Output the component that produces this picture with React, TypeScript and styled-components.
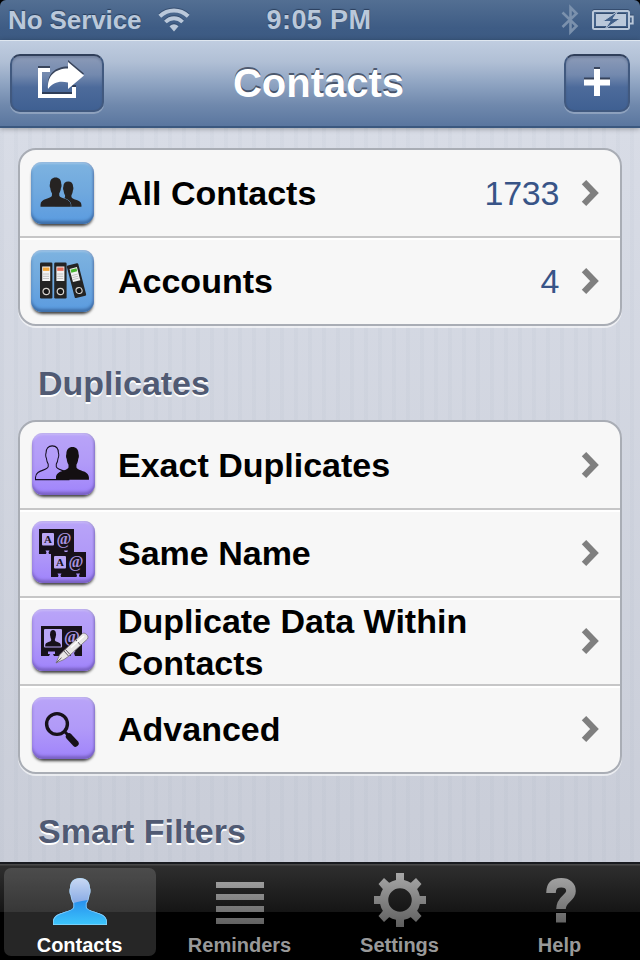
import type { ReactNode } from "react";
import { createGlobalStyle, styled } from "styled-components";

// head and shoulders, 54 x 47
const PERSON =
  "M27 0C33 0 37 3.5 37 10C38 12 37.5 16 36.5 17C36 21 35 23.5 33.5 25.5V29C35 35 54 33 54 44V47H0V44C0 33 19 35 20.5 29V25.5C19 23.5 18 21 17.5 17C16.5 16 16 12 17 10C17 3.5 21 0 27 0Z";

const AllContactsIcon = () => (
  <svg width="64" height="64">
    <g fill="#262322">
      <path d={PERSON} transform="translate(24 19.5) scale(.49 .535)" />
      <path
        d={PERSON}
        transform="translate(9.5 15.5) scale(.56 .62)"
        stroke="#6ea7dc"
        strokeWidth="1.6"
        paintOrder="stroke"
      />
    </g>
  </svg>
);

const Binder = ({ color }: { color: string }) => (
  <>
    <rect width="12.4" height="36" rx="1.2" fill="#242424" />
    <rect x="2.2" y="4" width="8" height="14.5" fill="#f2f2f2" />
    <rect x="3" y="5" width="6.4" height="3.4" fill={color} />
    <path d="M3 11.5h6M3 13.8h6M3 16h6" stroke="#b5b5b5" strokeWidth=".8" />
    <circle cx="6.2" cy="29" r="3.2" fill="#171717" stroke="#d8d4cf" strokeWidth="1.2" />
  </>
);

const AccountsIcon = () => (
  <svg width="64" height="64">
    <g transform="translate(9 12.5)">
      <Binder color="#f0a63c" />
    </g>
    <g transform="translate(23.2 12.5)">
      <Binder color="#e8705c" />
    </g>
    <g transform="translate(35.6 15.9) rotate(-14.5) scale(.95 .93)">
      <Binder color="#46b52d" />
    </g>
  </svg>
);

const ExactIcon = () => (
  <svg width="64" height="64">
    <path
      d={PERSON}
      transform="translate(3.5 12.8) scale(.62 .72)"
      fill="none"
      stroke="#130d1c"
      strokeWidth="1.6"
    />
    <path d={PERSON} transform="translate(24 14) scale(.61 .695)" fill="#140f12" />
  </svg>
);

const NameCard = () => (
  <>
    <path
      d="M0 0H35V25H28.5L28 23.5L29 21.5H25L26 23.5L25.5 25H10L9.5 23.5L10.5 21.5H6.5L7.5 23.5L7 25H0Z"
      fill="#17111a"
    />
    <rect x="3" y="4" width="12" height="12.5" rx="1" fill="#b9a6f5" />
    <CardLetter x="9" y="13.8" $size={11} $color="#17111a">
      A
    </CardLetter>
    <CardLetter x="25" y="15" $size={16} $color="#a893dd">
      @
    </CardLetter>
  </>
);

const SameNameIcon = () => (
  <svg width="64" height="64">
    <g transform="translate(7 8)">
      <NameCard />
    </g>
    <g transform="translate(19 31)">
      <NameCard />
    </g>
  </svg>
);

const DuplicateDataIcon = () => (
  <svg width="64" height="64">
    <path
      d="M9 17H50V47H43L42 44L43.5 42H38L39.5 44L38.5 47H22L21 45H23V42.5H16V45H18L17 47H9Z"
      fill="#17111a"
    />
    <rect x="12" y="20" width="18" height="18.5" rx="1" fill="#b9a6f5" />
    <path d={PERSON} transform="translate(13.2 21) scale(.29 .35)" fill="#17111a" />
    <CardLetter x="40" y="33" $size={17} $color="#a893dd">
      @
    </CardLetter>
    <path
      d="M24 54L27.5 46L32 41.5L50.5 24.5C53 23 57.5 27 55.5 30L37 47L32 50.5Z"
      fill="#e8e6e6"
      stroke="#767078"
      strokeWidth=".8"
    />
    <path
      d="M24.5 53.5L29.5 48.8M32 42L36.5 47M33.5 40.5L38 45.5M44 31L48.5 36"
      stroke="#5d575f"
    />
    <path d="M39 38.5L52 27" stroke="#fff" strokeWidth="1.5" />
  </svg>
);

const AdvancedIcon = () => (
  <svg width="64" height="64">
    <circle cx="25" cy="27" r="10.4" fill="none" stroke="#17111a" strokeWidth="3.4" />
    <path d="M32 34L37 39" stroke="#17111a" strokeWidth="3" />
    <path d="M37 39.5L43.5 46.5" stroke="#17111a" strokeWidth="6.4" strokeLinecap="round" />
  </svg>
);

const Chevron = () => (
  <svg width="20" height="28" viewBox="0 0 20 28">
    <path d="M4 3.2L14.5 14L4 24.8" fill="none" stroke="#7f7f7f" strokeWidth="6.2" />
  </svg>
);

const ShareIcon = () => (
  <S.EngravedSvg width="54" height="50" viewBox="-4 0 54 50">
    <path d="M16 12H6V38H40V29" fill="none" stroke="#fff" strokeWidth="4" />
    <path d="M34 4L50 17.5L34 31V24.5C26 22.5 19 24 14 31C13 18 21 10.5 34 10.5Z" fill="#fff" />
  </S.EngravedSvg>
);

const PlusIcon = () => (
  <S.EngravedSvg width="26" height="28" viewBox="0 0 26 28">
    <path d="M10 0H16V10.5H26V16.5H16V27H10V16.5H0V10.5H10Z" fill="#fff" />
  </S.EngravedSvg>
);

const WifiIcon = () => (
  <S.StatusSvg width="32" height="24" viewBox="0 0 32 24">
    <path d="M1.8 8.3C10 .5 22 .5 30.2 8.3" fill="none" stroke="#bac8da" strokeWidth="4" />
    <path d="M7.4 14C12.5 9 19.5 9 24.6 14" fill="none" stroke="#bac8da" strokeWidth="3.8" />
    <path d="M11.5 18.3C14 15.5 18 15.5 20.5 18.3L16 23.5Z" fill="#bac8da" />
  </S.StatusSvg>
);

const BluetoothIcon = () => (
  <svg width="18" height="32" viewBox="0 0 18 32">
    <path
      d="M1.5 8.5L15.5 22L9.5 28V3.5L15.5 9.5L1.5 23"
      fill="none"
      stroke="#7b91ad"
      strokeWidth="2.6"
    />
  </svg>
);

const BatteryIcon = () => (
  <S.StatusSvg width="42" height="22" viewBox="0 0 42 22">
    <rect x="1" y="2" width="36" height="18" rx="1.5" fill="none" stroke="#bac8da" strokeWidth="2" />
    <rect x="4" y="5" width="30" height="12" fill="#bac8da" />
    <path d="M37 7.5H40.7V14.5H37" fill="none" stroke="#bac8da" strokeWidth="2" />
    <path
      d="M26 2L10.5 12.5H18L13 20L28.5 9.5H21Z"
      fill="#41608a"
      stroke="#bac8da"
      strokeWidth="1"
    />
  </S.StatusSvg>
);

const GreyGradient = ({ id }: { id: string }) => (
  <linearGradient id={id} x1="0" y1="0" x2="0" y2="54" gradientUnits="userSpaceOnUse">
    <stop offset="0" stopColor="#a8a8a8" />
    <stop offset="1" stopColor="#5e5e5e" />
  </linearGradient>
);

const ContactsTabIcon = () => (
  <svg width="54" height="54" viewBox="0 0 54 54">
    <defs>
      <linearGradient id="head" x1="0" y1="0" x2="0" y2="1">
        <stop offset="0" stopColor="#c9d9f3" />
        <stop offset=".55" stopColor="#86a9e4" />
      </linearGradient>
      <linearGradient id="body" x1="0" y1="22" x2="0" y2="51" gradientUnits="userSpaceOnUse">
        <stop offset="0" stopColor="#2384ea" />
        <stop offset="1" stopColor="#3cc4fb" />
      </linearGradient>
      <clipPath id="person">
        <path d={PERSON} transform="translate(0 5)" />
      </clipPath>
    </defs>
    <g clipPath="url(#person)">
      <rect y="5" width="54" height="47" fill="url(#head)" />
      <path d="M0 36C14 32 26 28 38 26.5L54 24V52H0Z" fill="url(#body)" />
      <path
        d={PERSON}
        transform="translate(0 5)"
        fill="none"
        stroke="#a9dcfb"
        strokeOpacity=".7"
        strokeWidth="1.5"
      />
    </g>
  </svg>
);

const RemindersTabIcon = () => (
  <svg width="48" height="54" viewBox="0 0 48 54">
    <defs>
      <GreyGradient id="lines" />
    </defs>
    <path d="M0 9H48V15H0ZM0 21H48V27H0ZM0 33H48V39H0ZM0 45H48V51H0Z" fill="url(#lines)" />
  </svg>
);

const SettingsTabIcon = () => (
  <svg width="54" height="54" viewBox="0 0 54 54">
    <defs>
      <GreyGradient id="gear" />
    </defs>
    <circle cx="27" cy="27" r="16" fill="none" stroke="url(#gear)" strokeWidth="8.5" />
    <path
      fill="url(#gear)"
      d="M23 0H31V9H23ZM23 45H31V54H23ZM1 23H9V31H1ZM45 23H53V31H45ZM5.5 11L11 5L18 11.5L11.5 18ZM43 5L48.5 11L42.5 18L36 11.5ZM5.5 43L11 49L18 42.5L11.5 36ZM43 49L48.5 43L42.5 36L36 42.5Z"
    />
  </svg>
);

const HelpTabIcon = () => (
  <svg width="54" height="54" viewBox="0 0 54 54">
    <defs>
      <GreyGradient id="help" />
    </defs>
    <path
      d="M18 20C18 12 22.500 9.8 28.3 9.8C34.5 9.8 38 13 38 18C38 25.5 28 25.5 28 36"
      fill="none"
      stroke="url(#help)"
      strokeWidth="9.6"
    />
    <rect x="23" y="40" width="10" height="9.5" fill="url(#help)" />
  </svg>
);

type Tint = "blue" | "purple";

type Item = {
  label: string;
  icon: ReactNode;
  count?: number;
  wrap?: boolean;
};

const overview: Item[] = [
  { label: "All Contacts", icon: <AllContactsIcon />, count: 1733 },
  { label: "Accounts", icon: <AccountsIcon />, count: 4 },
];

const duplicates: Item[] = [
  { label: "Exact Duplicates", icon: <ExactIcon /> },
  { label: "Same Name", icon: <SameNameIcon /> },
  { label: "Duplicate Data Within Contacts", icon: <DuplicateDataIcon />, wrap: true },
  { label: "Advanced", icon: <AdvancedIcon /> },
];

const tabs = [
  { label: "Contacts", icon: <ContactsTabIcon />, active: true },
  { label: "Reminders", icon: <RemindersTabIcon />, active: false },
  { label: "Settings", icon: <SettingsTabIcon />, active: false },
  { label: "Help", icon: <HelpTabIcon />, active: false },
];

const Group = ({ items, tint }: { items: Item[]; tint: Tint }) => (
  <S.Group>
    {items.map(({ label, icon, count, wrap }) => (
      <S.Row key={label}>
        <S.Tile $tint={tint}>{icon}</S.Tile>
        <S.Label $wrap={wrap}>{label}</S.Label>
        {count !== undefined && <S.Count>{count}</S.Count>}
        <Chevron />
      </S.Row>
    ))}
  </S.Group>
);

const App = () => {
  return (
    <S.Screen>
      <GlobalStyle />
      <S.StatusBar>
        <S.Carrier>
          No Service
          <WifiIcon />
        </S.Carrier>
        <S.Clock>9:05 PM</S.Clock>
        <S.StatusRight>
          <BluetoothIcon />
          <BatteryIcon />
        </S.StatusRight>
      </S.StatusBar>
      <S.NavBar>
        <S.NavButton $width={94}>
          <ShareIcon />
        </S.NavButton>
        <S.Title>Contacts</S.Title>
        <S.NavButton $width={66}>
          <PlusIcon />
        </S.NavButton>
      </S.NavBar>
      <S.Content>
        <Group items={overview} tint="blue" />
        <S.SectionTitle>Duplicates</S.SectionTitle>
        <Group items={duplicates} tint="purple" />
        <S.SectionTitle>Smart Filters</S.SectionTitle>
      </S.Content>
      <S.TabBar>
        {tabs.map(({ label, icon, active }) => (
          <S.Tab key={label} $active={active}>
            {icon}
            <S.TabLabel>{label}</S.TabLabel>
          </S.Tab>
        ))}
      </S.TabBar>
    </S.Screen>
  );
};

const GlobalStyle = createGlobalStyle`
  body {
    margin: 0;
    background: #000;
    font-family: "Liberation Sans", Arial, sans-serif;
  }
  svg {
    display: block;
    flex: none;
  }
`;

const CardLetter = styled.text<{ $size: number; $color: string }>`
  font: bold ${({ $size }) => $size}px "Liberation Serif", serif;
  fill: ${({ $color }) => $color};
  text-anchor: middle;
`;

const S = {
  Screen: styled.div`
    display: flex;
    flex-direction: column;
    width: 640px;
    height: 960px;
    overflow: hidden;
  `,
  StatusBar: styled.div`
    display: grid;
    grid-template-columns: 1fr auto 1fr;
    align-items: center;
    box-sizing: border-box;
    height: 40px;
    padding: 0 6px 0 8px;
    border-radius: 6px 6px 0 0;
    background: linear-gradient(#536f93, #3e5c85 70%, #3c5a82);
    color: #bac8da;
    font-size: 26px;
    font-weight: bold;
    text-shadow: 0 -1px 1px rgba(20, 35, 60, 0.6);
  `,
  Carrier: styled.div`
    display: flex;
    align-items: center;
    gap: 17px;
    letter-spacing: -0.1px;
  `,
  Clock: styled.div`
    padding-right: 4px;
    font-size: 27px;
    letter-spacing: 0.4px;
  `,
  StatusRight: styled.div`
    display: flex;
    justify-content: flex-end;
    align-items: center;
    gap: 13px;
  `,
  StatusSvg: styled.svg`
    filter: drop-shadow(0 -1px 0 rgba(30, 50, 80, 0.5));
  `,
  NavBar: styled.div`
    position: relative;
    z-index: 1;
    display: flex;
    justify-content: space-between;
    box-sizing: border-box;
    height: 88px;
    padding: 13px 10px 0;
    border-top: 1px solid #dfe7f0;
    border-bottom: 2px solid #3b587f;
    background: linear-gradient(#c0cde0, #b0bfd5 25%, #8fa4c2 50%, #7089ad 75%, #5a769f);
    box-shadow: 0 1px 5px rgba(0, 0, 0, 0.3);
  `,
  NavButton: styled.div<{ $width: number }>`
    display: flex;
    align-items: center;
    justify-content: center;
    box-sizing: border-box;
    width: ${({ $width }) => $width}px;
    height: 58px;
    border: 2px solid #41597f;
    border-top-color: #303f5a;
    border-radius: 10px;
    background: linear-gradient(#8c9bb8, #7389ae 35%, #4d6b9b 58%, #3f6092);
    box-shadow:
      0 2px 0 rgba(255, 255, 255, 0.25),
      inset 0 2px 2px rgba(30, 45, 75, 0.2);
  `,
  EngravedSvg: styled.svg`
    filter: drop-shadow(0 -2px 0 rgba(40, 50, 70, 0.8));
  `,
  Title: styled.h1`
    margin: 0;
    padding-right: 31px;
    color: #fff;
    font-size: 40px;
    line-height: 58px;
    text-shadow: 0 -2px 0 rgba(50, 60, 80, 0.75);
  `,
  Content: styled.div`
    flex: 1;
    min-height: 0;
    padding: 20px 18px 0;
    overflow: hidden;
    background:
      repeating-linear-gradient(90deg, rgba(110, 130, 150, 0.04) 0 4px, transparent 4px 14px),
      linear-gradient(#d8dce6, #c9cdd8);
  `,
  SectionTitle: styled.h2`
    margin: 0;
    padding: 0 20px;
    height: 94px;
    color: #505a73;
    font-size: 34px;
    line-height: 114px;
    text-shadow: 0 2px 0 #fff;
  `,
  Group: styled.div`
    border: 2px solid #a9adb5;
    border-radius: 18px;
    background: #f7f7f7;
    box-shadow: 0 2px 0 rgba(255, 255, 255, 0.6);
  `,
  Row: styled.div`
    display: flex;
    align-items: center;
    height: 86px;
    padding: 0 20px 0 11px;

    & + & {
      border-top: 2px solid #c6c6c7;
      box-shadow: inset 0 2px 0 #fff;
    }
  `,
  Tile: styled.div<{ $tint: Tint }>`
    flex: none;
    width: 63px;
    height: 62px;
    margin-left: ${({ $tint }) => ($tint === "blue" ? 0 : 1)}px;
    margin-right: ${({ $tint }) => ($tint === "blue" ? 24 : 23)}px;
    margin-bottom: ${({ $tint }) => ($tint === "blue" ? 0 : 2)}px;
    border-radius: 11px;
    background: ${({ $tint }) =>
      $tint === "blue"
        ? "linear-gradient(#7db3e0, #6fa8de 50%, #5a9be0)"
        : "linear-gradient(#b9a4f8, #b19af8 50%, #9f83fb)"};
    box-shadow:
      inset 0 2px 2px rgba(255, 255, 255, 0.25),
      inset 0 -3px 3px ${({ $tint }) => ($tint === "blue" ? "#3f6fa8" : "#7a62c4")},
      inset -1px 0 2px rgba(40, 40, 110, 0.35),
      0 3px 3px -1px rgba(0, 0, 0, 0.75);
  `,
  Label: styled.div<{ $wrap?: boolean }>`
    flex: 1;
    max-width: 400px;
    margin-right: auto;
    padding-top: ${({ $wrap }) => ($wrap ? 2 : 0)}px;
    font-size: 34px;
    font-weight: bold;
    line-height: 42px;
  `,
  Count: styled.div`
    margin-right: 21px;
    color: #385487;
    font-size: 34px;
    letter-spacing: -0.3px;
  `,
  TabBar: styled.div`
    display: flex;
    box-sizing: border-box;
    height: 98px;
    padding: 2px 0;
    border-top: 2px solid #191b20;
    background: linear-gradient(#484848 0 1px, #2e2e2e 2px, #151515 48px, #000 48px);
  `,
  Tab: styled.div<{ $active: boolean }>`
    display: flex;
    flex-direction: column;
    align-items: center;
    box-sizing: border-box;
    width: 152px;
    height: 88px;
    margin: 2px 4px 0;
    padding-top: 5px;
    border-radius: 7px;
    background: ${({ $active }) => ($active ? "rgba(255, 255, 255, 0.15)" : "none")};
    color: ${({ $active }) => ($active ? "#fff" : "#999")};
  `,
  TabLabel: styled.div`
    margin-top: 6px;
    padding-right: 1px;
    font-size: 20px;
    font-weight: bold;
    line-height: 24px;
  `,
};

export default App;
